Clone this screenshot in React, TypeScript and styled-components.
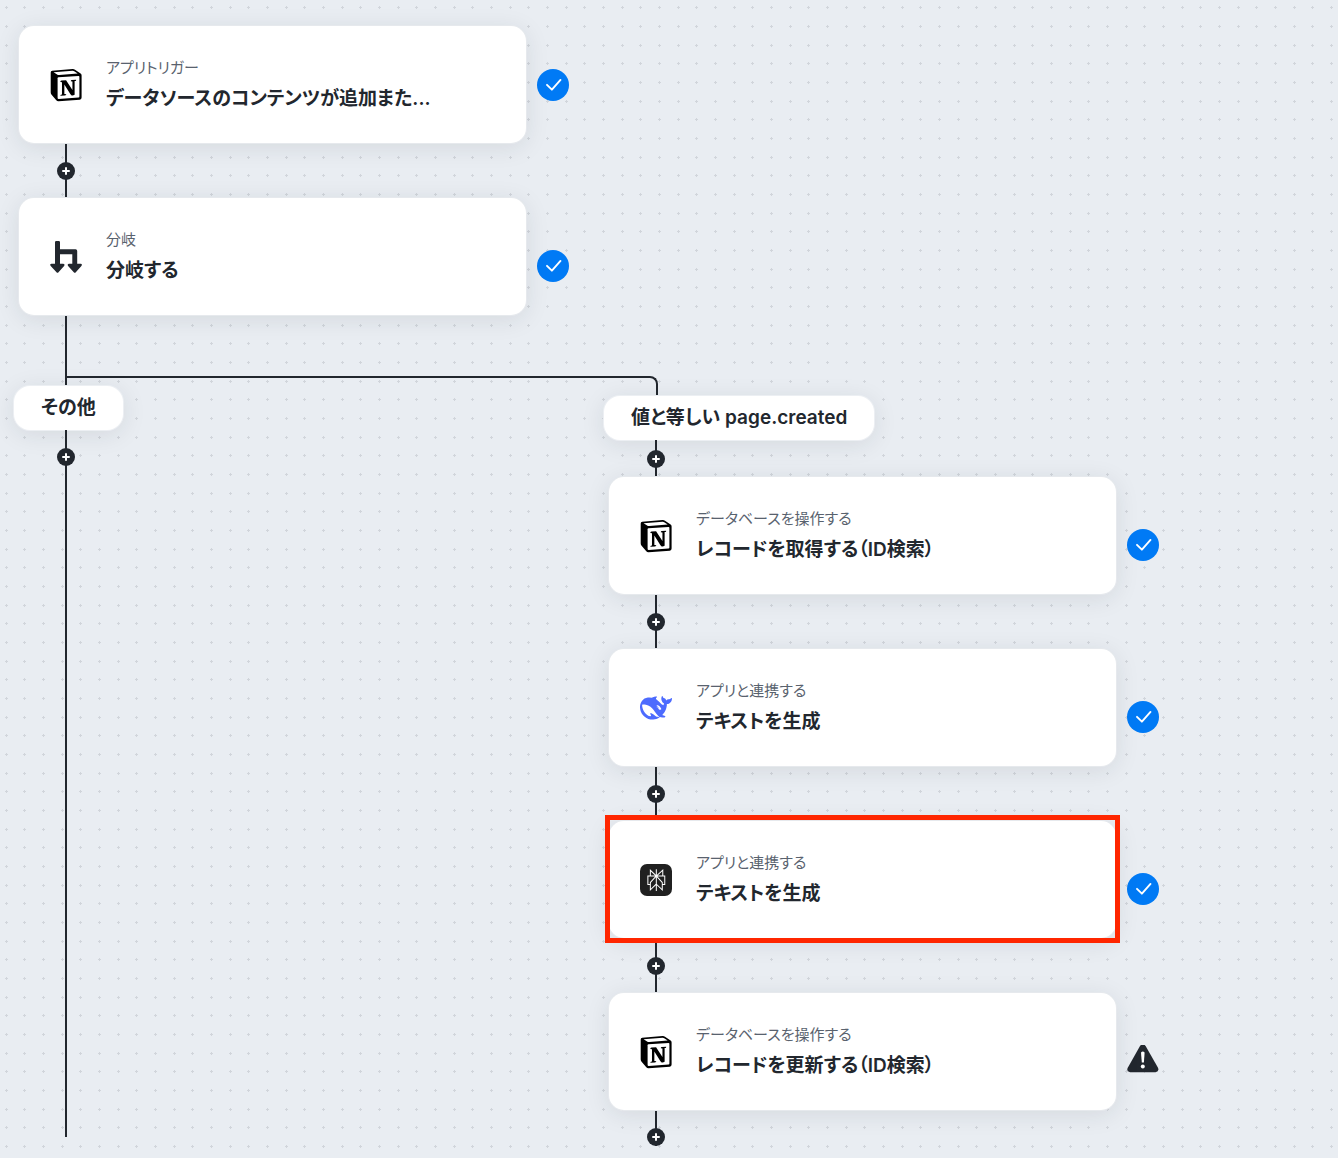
import React from "react";
import styled, { createGlobalStyle } from "styled-components";

const ink = "#22272e";

/* Dots repeat three to a 56px tile in both directions. */
const dotPath = [6, 24, 43]
  .flatMap((x) => [7, 26, 45].map((y) => `M${x} ${y - 1}h1v3h-1zM${x - 1} ${y}h3v1h-3z`))
  .join("");

const dotTile = `url("data:image/svg+xml,${encodeURIComponent(
  `<svg xmlns="http://www.w3.org/2000/svg" width="56" height="56"><path d="${dotPath}" fill="#d1d5db"/></svg>`
)}")`;

const GlobalStyle = createGlobalStyle`
  * { box-sizing: border-box; }
  body {
    margin: 0;
    background: #e9edf2;
    color: ${ink};
    font-family: Inter, "Noto Sans CJK JP", sans-serif;
    font-feature-settings: "palt";
  }
`;

const Canvas = styled.main`
  min-height: 100vh;
  padding: 26px 19px 12px;
  overflow: hidden;
  background: ${dotTile} #e9edf2;
`;

const NodeRow = styled.div`
  display: flex;
  align-items: center;
  gap: 11px;
`;

const Card = styled.article<{ $selected?: boolean }>`
  position: relative;
  display: flex;
  align-items: center;
  gap: 24px;
  width: 507px;
  height: 117px;
  padding: 0 31px;
  background: #fff;
  border-radius: 15px;
  box-shadow: 0 0 0 1px #e6e9ed, 0 4px 24px rgba(34, 39, 46, 0.1);

  &::after {
    content: "";
    display: ${(p) => (p.$selected ? "block" : "none")};
    position: absolute;
    inset: -6px -4px -5px -4px;
    border: 5px solid #ff2600;
  }
`;

const NodeIcon = styled.span`
  display: flex;
  flex: none;
  width: 32px;
  height: 32px;

  svg {
    width: 32px;
    height: 32px;
    overflow: visible;
  }
`;

const NodeText = styled.div`
  display: flex;
  flex-direction: column;
  gap: 6px;
  min-width: 0;
`;

const NodeLabel = styled.p`
  margin: 0;
  color: #59626e;
  font-size: 15px;
  line-height: 22px;
`;

const NodeTitle = styled.h2`
  margin: 0;
  font-size: 19px;
  font-weight: 600;
  line-height: 28px;
  white-space: nowrap;
`;

const Status = styled.span<{ $lowered?: boolean }>`
  display: flex;
  flex: none;
  padding-top: ${(p) => (p.$lowered ? 18 : 0)}px;
`;

const Link = styled.div<{ $height: number }>`
  display: flex;
  align-items: center;
  justify-content: center;
  width: 18px;
  height: ${(p) => p.$height}px;
  margin-left: 38px;
  background: linear-gradient(${ink}, ${ink}) center / 2px 100% no-repeat;
`;

const AddButton = styled.button`
  display: flex;
  align-items: center;
  justify-content: center;
  flex: none;
  width: 18px;
  height: 18px;
  padding: 0;
  border: 0;
  border-radius: 50%;
  background: ${ink};
  cursor: pointer;
`;

const Branches = styled.div`
  display: grid;
  grid-template-columns: 590px auto;
  grid-template-rows: 20px auto;
  justify-content: start;
`;

const Fork = styled.div`
  grid-area: 1 / 1 / 2 / 3;
  width: 593px;
  margin-left: 46px;
  border: solid ${ink};
  border-width: 2px 2px 0 0;
  border-top-right-radius: 8px;
`;

const OtherLane = styled.section`
  grid-area: 1 / 1 / 3 / 2;
  display: flex;
  flex-direction: column;
  align-items: flex-start;
  margin-bottom: 9px;
`;

const MatchLane = styled.section`
  grid-area: 2 / 2 / 3 / 3;
  display: flex;
  flex-direction: column;
  align-items: flex-start;
`;

const Rail = styled.div`
  flex: 1;
  width: 2px;
  margin-left: 46px;
  background: ${ink};
`;

const Tail = styled(Link)`
  align-items: flex-end;
`;

const Condition = styled.h3`
  display: flex;
  align-items: center;
  height: 44px;
  margin: 0 0 0 -5px;
  padding: 0 27px;
  background: #fff;
  border-radius: 16px;
  box-shadow: 0 0 0 1px #eceff3, 0 4px 24px rgba(34, 39, 46, 0.1);
  font-size: 19px;
  font-weight: 600;
  line-height: 28px;
  white-space: nowrap;
`;

const NotionIcon = () => (
  <svg viewBox="0 0 32 32" aria-hidden="true">
    <path
      d="M2.200 1.800L22.600 .1Q23.900 0 25 .7L30.600 4.600Q31.600 5.300 31.600 6.400V28.600Q31.600 30.500 29.800 30.700L8.600 32.200Q7.200 32.300 6.300 31.200L1.400 25.400Q.7 24.500 .7 23.300V3.500Q.7 2 2.200 1.800Z"
      fill="#000"
    />
    <path d="M3.600 3.300L22.700 1.700Q23.500 1.700 24.200 2.200L27.700 4.600L9.200 5.900Q8 6 7.100 5.400Z" fill="#fff" />
    <path
      d="M8.500 8.200L28.600 6.900Q29.400 6.900 29.400 7.700V27.500Q29.400 28.500 28.500 28.600L8.700 29.900Q7.600 29.900 7.600 28.900V9.300Q7.600 8.300 8.500 8.200Z"
      fill="#fff"
    />
    <path
      transform="scale(1.333)"
      d="M19.589 8.033c.093.42 0 .84-.42.888l-.7.14v10.264c-.608.327-1.168.514-1.635.514-.748 0-.935-.234-1.495-.933l-4.577-7.186v6.952L12.21 19s0 .84-1.168.84l-3.222.186c-.093-.186 0-.653.327-.746l.84-.233V9.854L7.822 9.76c-.094-.42.14-1.026.793-1.073l3.456-.233 4.764 7.279v-6.44l-1.215-.139c-.093-.514.28-.887.747-.933z"
      fill="#000"
    />
  </svg>
);

const BranchIcon = () => (
  <svg viewBox="0 0 32 32" fill={ink} aria-hidden="true">
    <path d="M6.200 0h2.600Q10 0 10 1.200V8.300H25.600Q27.200 8.300 27.200 9.900V22.800H30.600Q32.700 23.200 31.400 24.900L25.800 31.300Q24.800 32.400 23.800 31.300L18.100 24.900Q16.900 23.200 18.900 22.800H22.300V13.200H10V22.800H13.300Q15.300 23.200 14.100 24.900L8.500 31.300Q7.500 32.400 6.500 31.300L.7 24.900Q-.6 23.200 1.500 22.800H5V1.200Q5 0 6.200 0Z" />
  </svg>
);

const WhaleIcon = () => (
  <svg viewBox="0 0 24 24" fill="#4d6bfe" aria-hidden="true">
    <path d="M23.748 4.482c-.254-.124-.364.113-.512.234-.051.039-.094.09-.137.136-.372.397-.806.657-1.373.626-.829-.046-1.537.214-2.163.848-.133-.782-.575-1.248-1.247-1.548-.352-.156-.708-.311-.955-.65-.172-.241-.219-.51-.305-.774-.055-.16-.11-.323-.293-.35-.2-.031-.278.136-.356.276-.313.572-.434 1.202-.422 1.84.027 1.436.633 2.58 1.838 3.393.137.093.172.187.129.323-.082.28-.18.552-.266.833-.055.179-.137.217-.329.14a5.526 5.526 0 01-1.736-1.18c-.857-.828-1.631-1.742-2.597-2.458a11.365 11.365 0 00-.689-.471c-.985-.957.13-1.743.388-1.836.27-.098.093-.432-.779-.428-.872.004-1.67.295-2.687.684a3.055 3.055 0 01-.465.137 9.597 9.597 0 00-2.883-.102c-1.885.21-3.39 1.102-4.497 2.623C.082 8.606-.231 10.684.152 12.85c.403 2.284 1.569 4.175 3.36 5.653 1.858 1.533 3.997 2.284 6.438 2.14 1.482-.085 3.133-.284 4.994-1.86.47.234.962.327 1.78.397.63.059 1.236-.03 1.705-.128.735-.156.684-.837.419-.961-2.155-1.004-1.682-.595-2.113-.926 1.096-1.296 2.746-2.642 3.392-7.003.05-.347.007-.565 0-.845-.004-.17.035-.237.23-.256a4.173 4.173 0 001.545-.475c1.396-.763 1.96-2.015 2.093-3.517.02-.23-.004-.467-.247-.588zM11.581 18c-2.089-1.642-3.102-2.183-3.52-2.16-.392.024-.321.471-.235.763.09.288.207.486.371.739.114.167.192.416-.113.603-.673.416-1.842-.14-1.897-.167-1.361-.802-2.5-1.86-3.301-3.307-.774-1.393-1.224-2.887-1.298-4.482-.02-.386.093-.522.477-.592a4.696 4.696 0 011.529-.039c2.132.312 3.946 1.265 5.468 2.774.868.86 1.525 1.887 2.202 2.891.72 1.066 1.494 2.082 2.48 2.914.348.292.625.514.891.677-.802.09-2.14.11-3.054-.614zm1-6.44a.306.306 0 01.415-.287.302.302 0 01.2.288.306.306 0 01-.31.307.303.303 0 01-.304-.308zm3.11 1.596c-.2.081-.399.151-.59.16a1.245 1.245 0 01-.798-.254c-.274-.23-.47-.358-.552-.758a1.73 1.73 0 01.016-.588c.07-.327-.008-.537-.239-.727-.187-.156-.426-.199-.688-.199a.559.559 0 01-.254-.078.253.253 0 01-.114-.358c.028-.054.16-.186.192-.21.356-.202.767-.136 1.146.016.352.144.618.408 1.001.782.391.451.462.576.685.914.176.265.336.537.445.848.067.195-.019.354-.25.452z" />
  </svg>
);

const AsteriskIcon = () => (
  <svg viewBox="0 0 32 32" aria-hidden="true">
    <rect width="32" height="32" rx="7" fill="#202020" />
    <path
      transform="translate(6 5) scale(.86 .92)"
      fill="#fff"
      d="M22.398 7.09h-2.311V.068l-7.51 6.354V.158h-1.155v6.196L4.49 0v7.09H1.602v10.397H4.49V24l6.932-6.359v6.2h1.156v-6.047l6.932 6.181v-6.488h2.888V7.09zm-3.466-4.531v4.53h-5.355l5.355-4.53zm-13.286.067l4.869 4.464H5.646V2.626zM2.758 16.332V8.245h7.847L4.49 14.36v1.972H2.758zm2.888 5.04v-6.534l5.776-5.776v7.011l-5.776 5.3zm12.709.025l-5.777-5.151V9.062l5.777 5.776v6.559zm2.888-5.065H19.51V14.36l-6.115-6.115h7.848v8.087z"
    />
  </svg>
);

const PlusIcon = () => (
  <svg width="18" height="18" viewBox="0 0 18 18" aria-hidden="true">
    <path d="M9 6v6M6 9h6" stroke="#fff" strokeWidth="2" strokeLinecap="round" />
  </svg>
);

const DoneIcon = () => (
  <svg width="32" height="32" viewBox="0 0 32 32" role="img" aria-label="完了">
    <circle cx="16" cy="16" r="16" fill="#007af5" />
    <path
      d="M10 15.800l4.900 4.900 8.600-9.800"
      fill="none"
      stroke="#fff"
      strokeWidth="1.900"
      strokeLinecap="round"
      strokeLinejoin="round"
    />
  </svg>
);

const WarningIcon = () => (
  <svg width="32" height="32" viewBox="0 1 32 32" role="img" aria-label="警告">
    <path
      d="M13 2Q15.800 -1.600 18.600 2L31 23.800Q32.400 27.600 28.600 28.200H3.200Q-.6 27.600 .6 24Z"
      fill={ink}
    />
    <path d="M14 8.500Q15.800 6.700 17.600 8.500L16.900 18.400H14.800Z" fill="#fff" />
    <circle cx="15.800" cy="22.500" r="2" fill="#fff" />
  </svg>
);

const Add = () => (
  <AddButton type="button" aria-label="追加">
    <PlusIcon />
  </AddButton>
);

const Connector = ({ height }: { height: number }) => (
  <Link $height={height}>
    <Add />
  </Link>
);

const icons = {
  notion: <NotionIcon />,
  branch: <BranchIcon />,
  whale: <WhaleIcon />,
  asterisk: <AsteriskIcon />,
};

type FlowNodeProps = {
  icon: keyof typeof icons;
  label: string;
  title: string;
  status?: "done" | "warning";
  lowered?: boolean;
  selected?: boolean;
};

const FlowNode = ({
  icon,
  label,
  title,
  status = "done",
  lowered,
  selected,
}: FlowNodeProps) => (
  <NodeRow>
    <Card $selected={selected}>
      <NodeIcon>{icons[icon]}</NodeIcon>
      <NodeText>
        <NodeLabel>{label}</NodeLabel>
        <NodeTitle>{title}</NodeTitle>
      </NodeText>
    </Card>
    <Status $lowered={lowered}>
      {status === "done" ? <DoneIcon /> : <WarningIcon />}
    </Status>
  </NodeRow>
);

const steps: FlowNodeProps[] = [
  { icon: "notion", label: "データベースを操作する", title: "レコードを取得する（ID検索）" },
  { icon: "whale", label: "アプリと連携する", title: "テキストを生成" },
  { icon: "asterisk", label: "アプリと連携する", title: "テキストを生成", selected: true },
  {
    icon: "notion",
    label: "データベースを操作する",
    title: "レコードを更新する（ID検索）",
    status: "warning",
  },
];

export default function App() {
  return (
    <>
      <GlobalStyle />
      <Canvas>
        <FlowNode
          icon="notion"
          label="アプリトリガー"
          title="データソースのコンテンツが追加また..."
        />
        <Connector height={55} />
        <FlowNode icon="branch" label="分岐" title="分岐する" lowered />
        <Link $height={61} />
        <Branches>
          <Fork />
          <OtherLane>
            <Link $height={10} />
            <Condition>その他</Condition>
            <Connector height={54} />
            <Rail />
          </OtherLane>
          <MatchLane>
            <Condition>値と等しい page.created</Condition>
            <Connector height={37} />
            {steps.map((step, i) => (
              <React.Fragment key={i}>
                {i > 0 && <Connector height={55} />}
                <FlowNode {...step} lowered />
              </React.Fragment>
            ))}
            <Tail $height={36}>
              <Add />
            </Tail>
          </MatchLane>
        </Branches>
      </Canvas>
    </>
  );
}
